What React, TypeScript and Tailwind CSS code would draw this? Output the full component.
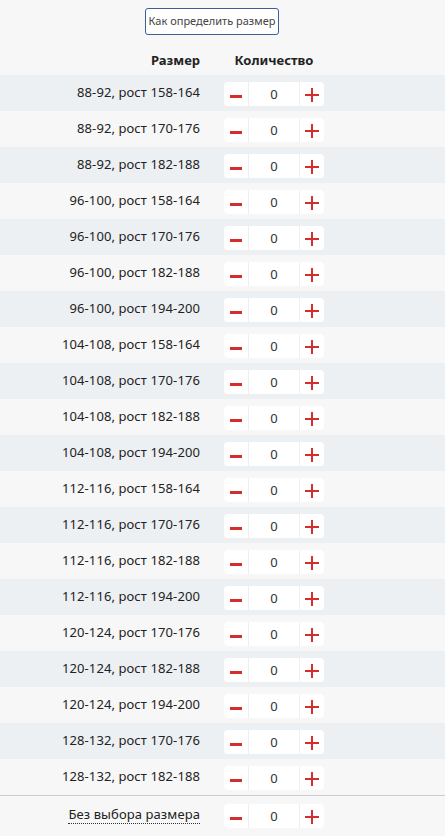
import React from "react";

const sizes = [
	"88-92, рост 158-164",
	"88-92, рост 170-176",
	"88-92, рост 182-188",
	"96-100, рост 158-164",
	"96-100, рост 170-176",
	"96-100, рост 182-188",
	"96-100, рост 194-200",
	"104-108, рост 158-164",
	"104-108, рост 170-176",
	"104-108, рост 182-188",
	"104-108, рост 194-200",
	"112-116, рост 158-164",
	"112-116, рост 170-176",
	"112-116, рост 182-188",
	"112-116, рост 194-200",
	"120-124, рост 170-176",
	"120-124, рост 182-188",
	"120-124, рост 194-200",
	"128-132, рост 170-176",
	"128-132, рост 182-188",
];

function Counter() {
	return (
		<div className="mt-[2px] flex h-[24px] w-[100px] items-stretch rounded-[4px] bg-white">
			<button className="flex w-[25px] items-center justify-center border-r border-[#eeeeee]">
				<span className="mt-[5px] block h-[3px] w-[12px] bg-[#d32f2f]" />
			</button>
			<div className="flex flex-1 items-center justify-center pt-[1px] text-[13px] text-[#333]">0</div>
			<button className="relative flex w-[25px] items-center justify-center border-l border-[#eeeeee]">
				<span className="absolute mt-[2px] h-[2px] w-[14px] bg-[#d32f2f]" />
				<span className="absolute mt-[2px] h-[14px] w-[2px] bg-[#d32f2f]" />
			</button>
		</div>
	);
}

export default function App() {
	return (
		<div className="min-h-[836px] w-[445px] bg-[#f7f7f7] font-['Noto_Sans',sans-serif] text-[#222]">
			<div className="flex pt-[8px] pl-[145px]">
				<button className="h-[27px] w-[134px] rounded-[3px] border border-[#3d5f99] bg-white text-[11px] text-[#444]">
					Как определить размер
				</button>
			</div>

			{/* header */}
			<div className="mt-[13px] grid h-[26px] grid-cols-[212px_124px] items-center text-[13px] font-bold">
				<div className="pr-[12px] text-right">Размер</div>
				<div className="text-center">Количество</div>
			</div>

			<div className="mt-[1px]">
				{sizes.map((size, index) => (
					<div
						key={index}
						className={
							"grid h-[36px] grid-cols-[212px_124px] items-center " +
							(index % 2 === 0 ? "bg-[#edf0f3]" : "bg-[#f7f7f7]")
						}
					>
						<div className="pr-[12px] text-right text-[13px] tracking-[0.1px]">{size}</div>
						<div className="flex justify-center">
							<Counter />
						</div>
					</div>
				))}
			</div>

			<div className="grid h-[37px] grid-cols-[212px_124px] items-center border-t border-[#cccccc] pt-[2px]">
				<div className="pr-[12px] text-right text-[13px] tracking-[0.1px]">
					<span className="border-b border-dotted border-[#333]">Без выбора размера</span>
				</div>
				<div className="flex justify-center">
					<Counter />
				</div>
			</div>
		</div>
	);
}
